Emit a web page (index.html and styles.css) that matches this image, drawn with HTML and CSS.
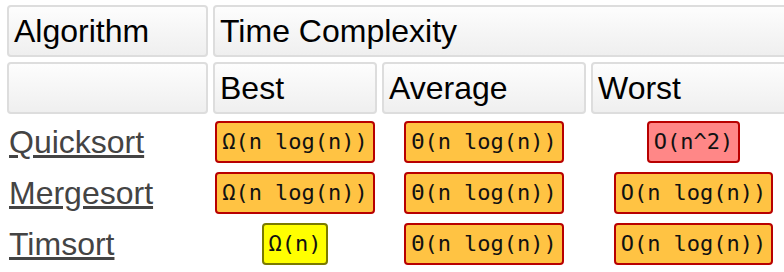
FILE: index.html
```html
<!DOCTYPE html>
<html>
<head>
<meta charset="utf-8">
<link rel="stylesheet" href="styles.css">
</head>
<body>
<table class="complexity">
  <colgroup>
    <col class="c-algo">
    <col class="c-best">
    <col class="c-avg">
    <col class="c-worst">
  </colgroup>
  <thead>
    <tr>
      <th class="head">Algorithm</th>
      <th class="head" colspan="3">Time Complexity</th>
    </tr>
    <tr>
      <th class="head"></th>
      <th class="head">Best</th>
      <th class="head">Average</th>
      <th class="head">Worst</th>
    </tr>
  </thead>
  <tbody>
    <tr>
      <td class="name"><a href="#">Quicksort</a></td>
      <td class="val"><span class="badge fair">Ω(n log(n))</span></td>
      <td class="val"><span class="badge fair">Θ(n log(n))</span></td>
      <td class="val"><span class="badge bad">O(n^2)</span></td>
    </tr>
    <tr>
      <td class="name"><a href="#">Mergesort</a></td>
      <td class="val"><span class="badge fair">Ω(n log(n))</span></td>
      <td class="val"><span class="badge fair">Θ(n log(n))</span></td>
      <td class="val"><span class="badge fair">O(n log(n))</span></td>
    </tr>
    <tr>
      <td class="name"><a href="#">Timsort</a></td>
      <td class="val"><span class="badge good">Ω(n)</span></td>
      <td class="val"><span class="badge fair">Θ(n log(n))</span></td>
      <td class="val"><span class="badge fair">O(n log(n))</span></td>
    </tr>
  </tbody>
</table>
</body>
</html>
```
FILE: styles.css
```css
html, body {
  margin: 0;
  padding: 0;
  background: #ffffff;
}

body {
  font-family: "Liberation Sans", Arial, sans-serif;
  font-size: 32px;
  color: #000;
  overflow: hidden;
}

.complexity {
  border-collapse: separate;
  border-spacing: 5px;
  table-layout: fixed;
  width: 799px;
  margin-left: 2px;
}

.c-algo { width: 201px; }
.c-best { width: 164px; }
.c-avg { width: 204px; }
.c-worst { width: 205px; }

.head {
  box-sizing: border-box;
  height: 52px;
  padding: 0 5px;
  border: 2px solid #dddddd;
  border-radius: 4px;
  background: linear-gradient(#fdfdfd, #efefef);
  font-weight: normal;
  text-align: left;
  vertical-align: middle;
  white-space: nowrap;
}

.name,
.val {
  box-sizing: border-box;
  height: 46px;
  padding: 0 2px;
  vertical-align: middle;
  white-space: nowrap;
}

.val {
  text-align: center;
}

.name a {
  color: #444444;
  text-decoration: underline;
}

.badge {
  display: inline-block;
  font-family: "DejaVu Sans Mono", monospace;
  font-size: 22px;
  line-height: 26px;
  padding: 6px 5px;
  border: 2px solid #b80000;
  border-radius: 4px;
  color: #111;
  vertical-align: middle;
}

.fair {
  background: #ffc343;
}

.bad {
  background: #ff8787;
}

.good {
  background: #ffff00;
  border-color: #7a7a00;
}
```
